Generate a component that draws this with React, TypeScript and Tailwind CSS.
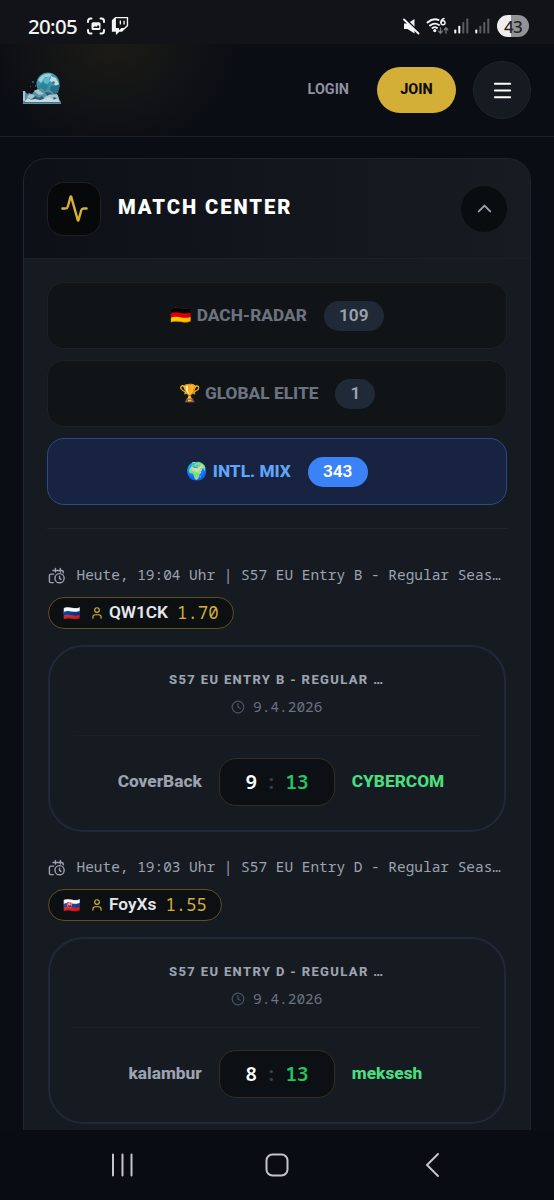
import { Activity, ChevronUp, Clock, Menu, User } from "lucide-react"
import { FaTwitch } from "react-icons/fa"
import { clsx } from "clsx"
import { useState } from "react"

type Match = {
    id: number
    time: string
    league: string
    title: string
    flag: string
    player: string
    rating: string
    date: string
    teamA: string
    teamB: string
    scoreA: number
    scoreB: number
}

const tabs = [
    { id: "dach", icon: "🇩🇪", label: "DACH-RADAR", count: 109 },
    { id: "elite", icon: "🏆", label: "GLOBAL ELITE", count: 1 },
    { id: "mix", icon: "🌍", label: "INTL. MIX", count: 343 },
]

const matches: Match[] = [
    {
        id: 1,
        time: "19:04",
        league: "S57 EU Entry B - Regular Seas…",
        title: "S57 EU ENTRY B - REGULAR …",
        flag: "🇷🇺",
        player: "QW1CK",
        rating: "1.70",
        date: "9.4.2026",
        teamA: "CoverBack",
        teamB: "CYBERCOM",
        scoreA: 9,
        scoreB: 13,
    },
    {
        id: 2,
        time: "19:03",
        league: "S57 EU Entry D - Regular Seas…",
        title: "S57 EU ENTRY D - REGULAR …",
        flag: "🇸🇰",
        player: "FoyXs",
        rating: "1.55",
        date: "9.4.2026",
        teamA: "kalambur",
        teamB: "meksesh",
        scoreA: 8,
        scoreB: 13,
    },
]

const Signal = ({ level }: { level: number }) => (
    <svg width="15" height="16" viewBox="0 0 15 16">
        {[0, 1, 2, 3].map((i) => (
            <rect
                key={i}
                x={0.3 + i * 4}
                y={11.5 - i * 3.7}
                width="2"
                height={4 + i * 3.7}
                rx="0.8"
                fill={i < level ? "#f4f4f5" : "#5b5c61"}
            />
        ))}
    </svg>
)

const StatusBar = () => (
    <div className="flex h-11 shrink-0 items-center justify-between bg-[#121318] pt-2 pr-[25px] pl-7 text-[#f4f4f5]">
        <div className="flex items-center">
            <span className="w-[50px] font-['Noto_Sans'] text-[20.5px] leading-none font-medium tracking-[-0.7px]">20:05</span>
            <svg className="ml-2" width="20" height="18" viewBox="0 0 20 18" fill="none" stroke="currentColor" strokeWidth="2" strokeLinecap="round">
                <path d="M2 5V4a2.500 2.500 0 0 1 2.500-2.500H5.500M14.500 1.500h1A2.500 2.500 0 0 1 18 4v1M18 13v1a2.500 2.500 0 0 1-2.500 2.500h-1M5.500 16.500h-1A2.500 2.500 0 0 1 2 14v-1" />
                <rect x="5.500" y="5.200" width="9" height="7.800" rx="1.500" fill="currentColor" stroke="none" />
                <path d="M7 11l2-2 1.300 1 1.700-2 1.200 1.300V11z" fill="#121318" stroke="none" />
            </svg>
            <FaTwitch className="ml-[5px]" size={18} />
        </div>
        <div className="flex items-center">
            <svg width="17" height="17" viewBox="0 0 17 17">
                <path d="M1 5.500h3.500L11.500 1v14.500L4.500 11H1z" fill="currentColor" />
                <path d="M1.500 0L17 15.500" stroke="#121318" strokeWidth="2" />
                <path d="M1 1.500l14.500 14" stroke="currentColor" strokeWidth="1.800" strokeLinecap="round" />
            </svg>
            <svg className="ml-1.5" width="24" height="18" viewBox="0 0 24 18" fill="none" stroke="currentColor" strokeWidth="1.900" strokeLinecap="round">
                <path d="M1.500 5.500Q7 .800 12.500 3M4 8.500Q8.500 5 13 8M6.500 11q2.500-1.700 4.500 0" />
                <circle cx="8.800" cy="13.600" r="1.600" fill="currentColor" stroke="none" />
                <path d="M18 1.500Q15 2.500 15 5.500" strokeWidth="1.500" />
                <circle cx="17" cy="5.800" r="2" strokeWidth="1.500" />
                <path d="M14.500 11v5M12.700 14.300l1.800 1.900 1.800-1.900M20 16v-5M18.200 12.700l1.800-1.900 1.800 1.900" stroke="#77787d" strokeWidth="1.300" />
            </svg>
            <div className="ml-1 flex gap-[6px]">
                <Signal level={2} />
                <Signal level={1} />
            </div>
            <div className="ml-[7px] flex h-[22px] w-8 items-center justify-center rounded-full bg-linear-to-r from-[#eeeeef] from-43% to-[#929397] to-43% font-['Noto_Sans'] text-[17px] leading-none font-medium tracking-[-0.8px] text-[#222327]">
                43
            </div>
        </div>
    </div>
)

// ice globe breaking through a wave
const Logo = () => (
    <svg width="38" height="32" viewBox="0 0 38 32">
        <circle cx="25" cy="12" r="11.500" fill="#3a93aa" />
        <path d="M15 8q5-8 14-6l-3 4-4-1-4 6z" fill="#9cccd8" />
        <path d="M15 14l6-4 4 4-3 7-6-2z" fill="#2b8299" />
        <path d="M20 7l5-2 3 3-4 4-3-1z" fill="#55bccb" />
        <path d="M28 4l5 2 3 6-3 2-3-3-3-2z" fill="#c3dae2" />
        <path d="M30 9l2 1-1 2-2-1z" fill="#3a6474" />
        <path d="M28 14l9-1-2 8-6 3-3-4z" fill="#2a7088" />
        <path d="M0 20l2-1 2 3 2-1 3 1 3-4 3 1 3-3 4 3 5-1 4 4 4 1 1 4 2 3v2H0z" fill="#5693a5" />
        <path d="M0 19h2v10H0zM4 25l3-3 4 1 1 2-4 2zM11 19l4-2 2 2 4 3-5 1zM20 27l5-5 3 1 6-1 2 5v3H22z" fill="#a5c5ce" />
        <path d="M9 27l3-3 4 2 3-2 2 3-6 2zM22 20l7 1-5 3zM30 25l4 1-3 2z" fill="#2d5c70" />
        <path d="M2 29l3-3 3 2 4-1 5 1 4-1 5-2 4 3 4-1 4 4H2z" fill="#c8dae0" />
        <path d="M1 30h37v1H1z" fill="#47707f" />
        <path d="M9 9h2v2H9zM12 13h1v2h-1zM7 14h1v1H7z" fill="#38505e" />
    </svg>
)

const Navbar = () => (
    <div className="flex h-[93px] shrink-0 items-center justify-between border-b border-[#1c2028] bg-[radial-gradient(ellipse_130px_110px_at_112px_0px,#1c1b16,#10121400)] px-[23px]">
        <div className="-mt-[4px]">
            <Logo />
        </div>
        <div className="flex items-center">
            <button className="text-[14.400px] font-bold text-[#9090a0]">LOGIN</button>
            <button className="ml-[28px] h-[46px] w-[79px] rounded-full bg-[#d4af37] text-[14.400px] font-extrabold text-[#0d0e10]">JOIN</button>
            <button className="ml-[17px] flex size-[58px] items-center justify-center rounded-full border border-[#1f232b] bg-[#161a21] text-white">
                <Menu size={23} />
            </button>
        </div>
    </div>
)

const ScheduleIcon = () => (
    <svg
        className="shrink-0"
        width="17"
        height="17"
        viewBox="0 0 24 24"
        fill="none"
        stroke="currentColor"
        strokeWidth="2"
        strokeLinecap="round"
        strokeLinejoin="round"
    >
        <path d="M7 5h12.500a2 2 0 0 1 2 2v1M10.500 2v5M17.500 2v5" />
        <path d="M8 10H4a2 2 0 0 0-2 2v8.500a1.500 1.500 0 0 0 1.500 1.500H7.500" />
        <circle cx="16.300" cy="15.800" r="6.500" />
        <path d="M16.300 13v3l2 1.500" />
    </svg>
)

const MatchItem = ({ match }: { match: Match }) => (
    <div>
        {/* Time + league */}
        <div className="flex h-[21px] items-center pl-[1px] text-[#9ca3af]">
            <ScheduleIcon />
            <span className="-mt-[2px] ml-[11.500px] font-[Droid_Sans_Mono,Noto_Sans_Mono,DejaVu_Sans_Mono,monospace] text-[14.450px] whitespace-nowrap">
                Heute, {match.time} Uhr | {match.league}
            </span>
        </div>

        {/* Player */}
        <div className="mt-[11px] ml-[0.5px] flex h-8 w-fit items-center rounded-full border border-[#5e4f21] bg-[#0d1013] pr-[14.500px] pl-[14px]">
            <span className="w-[18px] text-[14px] leading-5">{match.flag}</span>
            <User size={14} className="ml-[9px] text-[#d4af37]" />
            <span className="ml-[5.500px] text-[17.300px] font-semibold text-[#e5e7eb]">{match.player}</span>
            <span className="ml-[9px] font-[Droid_Sans_Mono,Noto_Sans_Mono,DejaVu_Sans_Mono,monospace] text-[17.300px] text-[#d4af37]">{match.rating}</span>
        </div>

        {/* Result card */}
        <div className="mr-[1px] ml-[0.500px] mt-[16px] flex h-[187px] flex-col rounded-[35px] border-[2.500px] border-[#1f2937] px-[23px]">
            <div className="mt-[23px] text-center text-[13px] leading-5 font-extrabold tracking-[1.350px] text-[#9ca3af]">{match.title}</div>
            <div className="mt-[7px] flex h-5 items-center justify-center gap-[8px] text-[#6b7280]">
                <Clock size={14} className="text-[#4b5563]" />
                <span className="font-[Droid_Sans_Mono,Noto_Sans_Mono,DejaVu_Sans_Mono,monospace] text-[14.450px]">{match.date}</span>
            </div>
            <div className="mt-[18px] h-px bg-[#1c2129]" />
            <div className="mt-[22px] flex items-center text-[17.300px] font-extrabold">
                <span className="flex-1 text-right text-[#9ca3af]">{match.teamA}</span>
                <div className="mx-[17px] flex h-12 w-[116px] items-center justify-center rounded-[17px] border border-[#332f22] bg-[#0c0f13] font-[Droid_Sans_Mono,Noto_Sans_Mono,DejaVu_Sans_Mono,monospace] text-[20px] font-semibold">
                    <span className="text-white">{match.scoreA}</span>
                    <span className="mx-[8px] text-[#374151]">:</span>
                    <span className="tracking-[-0.5px] text-[#22c55e]">{match.scoreB}</span>
                </div>
                <span className="flex-1 text-[#4ade80]">{match.teamB}</span>
            </div>
        </div>
    </div>
)

const MatchCenter = () => {
    const [open, setOpen] = useState(true)
    const [active, setActive] = useState("mix")

    return (
        <div className="mx-[23px] mt-[21px] flex-1 overflow-hidden rounded-t-[23px] border border-b-0 border-[#20242c] bg-[#161b22]">
            <div className="flex h-[100px] items-center border-b border-[#1c2129] bg-linear-to-r from-[#0d1117] to-[#181b22] px-[23px]">
                <div className="flex size-[54px] items-center justify-center rounded-[17px] border border-[#1e2023] bg-[#07080a] text-[#d4af37]">
                    <Activity size={29} />
                </div>
                <h2 className="-mt-[2px] ml-[17px] flex-1 text-[20.200px] font-black tracking-[1.950px] text-white">MATCH CENTER</h2>
                <button
                    onClick={() => setOpen(!open)}
                    className="flex size-[46px] items-center justify-center rounded-full bg-[#0a0d10] text-[#9ca3af]"
                >
                    <ChevronUp size={23} />
                </button>
            </div>

            {open && (
                <div className="px-[23px] pt-[23px]">
                    <div className="flex flex-col gap-[11px] border-b border-[#20252c] pb-[23px]">
                        {tabs.map((tab) => (
                            <button
                                key={tab.id}
                                onClick={() => setActive(tab.id)}
                                className={clsx(
                                    "flex h-[67px] items-center justify-center rounded-[17px] border text-[17.300px] font-extrabold",
                                    active === tab.id
                                        ? "border-[#2a4a86] bg-[#172340] text-[#60a5fa]"
                                        : "border-[#1d2126] bg-[#111417] text-[#6b7280]"
                                )}
                            >
                                <span>{tab.icon} {tab.label}</span>
                                <span
                                    className={clsx(
                                        "ml-[17px] flex h-[30px] items-center rounded-full px-[15px] font-semibold",
                                        active === tab.id ? "bg-[#3b82f6] text-white" : "bg-[#1f2937] text-[#9ca3af]"
                                    )}
                                >
                                    {tab.count}
                                </span>
                            </button>
                        ))}
                    </div>

                    <div className="flex flex-col gap-[25px] pt-[36px]">
                        {matches.map((match) => (
                            <MatchItem key={match.id} match={match} />
                        ))}
                    </div>
                </div>
            )}
        </div>
    )
}

const SystemNav = () => (
    <div className="flex h-[70px] shrink-0 items-center justify-between bg-[#0a0c13] pr-[110px] pl-[110px] text-[#c4c5c9]">
        <svg width="24" height="24" viewBox="0 0 24 24" stroke="currentColor" strokeWidth="2" strokeLinecap="round">
            <path d="M3 1.500v21M12.500 1.500v21M21.500 1.500v21" />
        </svg>
        <svg width="24" height="24" viewBox="0 0 24 24" fill="none" stroke="currentColor" strokeWidth="2">
            <rect x="1.500" y="1.500" width="21" height="21" rx="6" />
        </svg>
        <svg width="24" height="26" viewBox="0 0 24 26" fill="none" stroke="currentColor" strokeWidth="2" strokeLinecap="round" strokeLinejoin="round">
            <path d="M18 2L7 13 18 24" />
        </svg>
    </div>
)

const App = () => {
    return (
        <div className="flex h-[1200px] w-[554px] flex-col overflow-hidden bg-[#0a0d14] font-[Roboto,sans-serif]">
            <StatusBar />
            <Navbar />
            <MatchCenter />
            <SystemNav />
        </div>
    )
}

export default App
